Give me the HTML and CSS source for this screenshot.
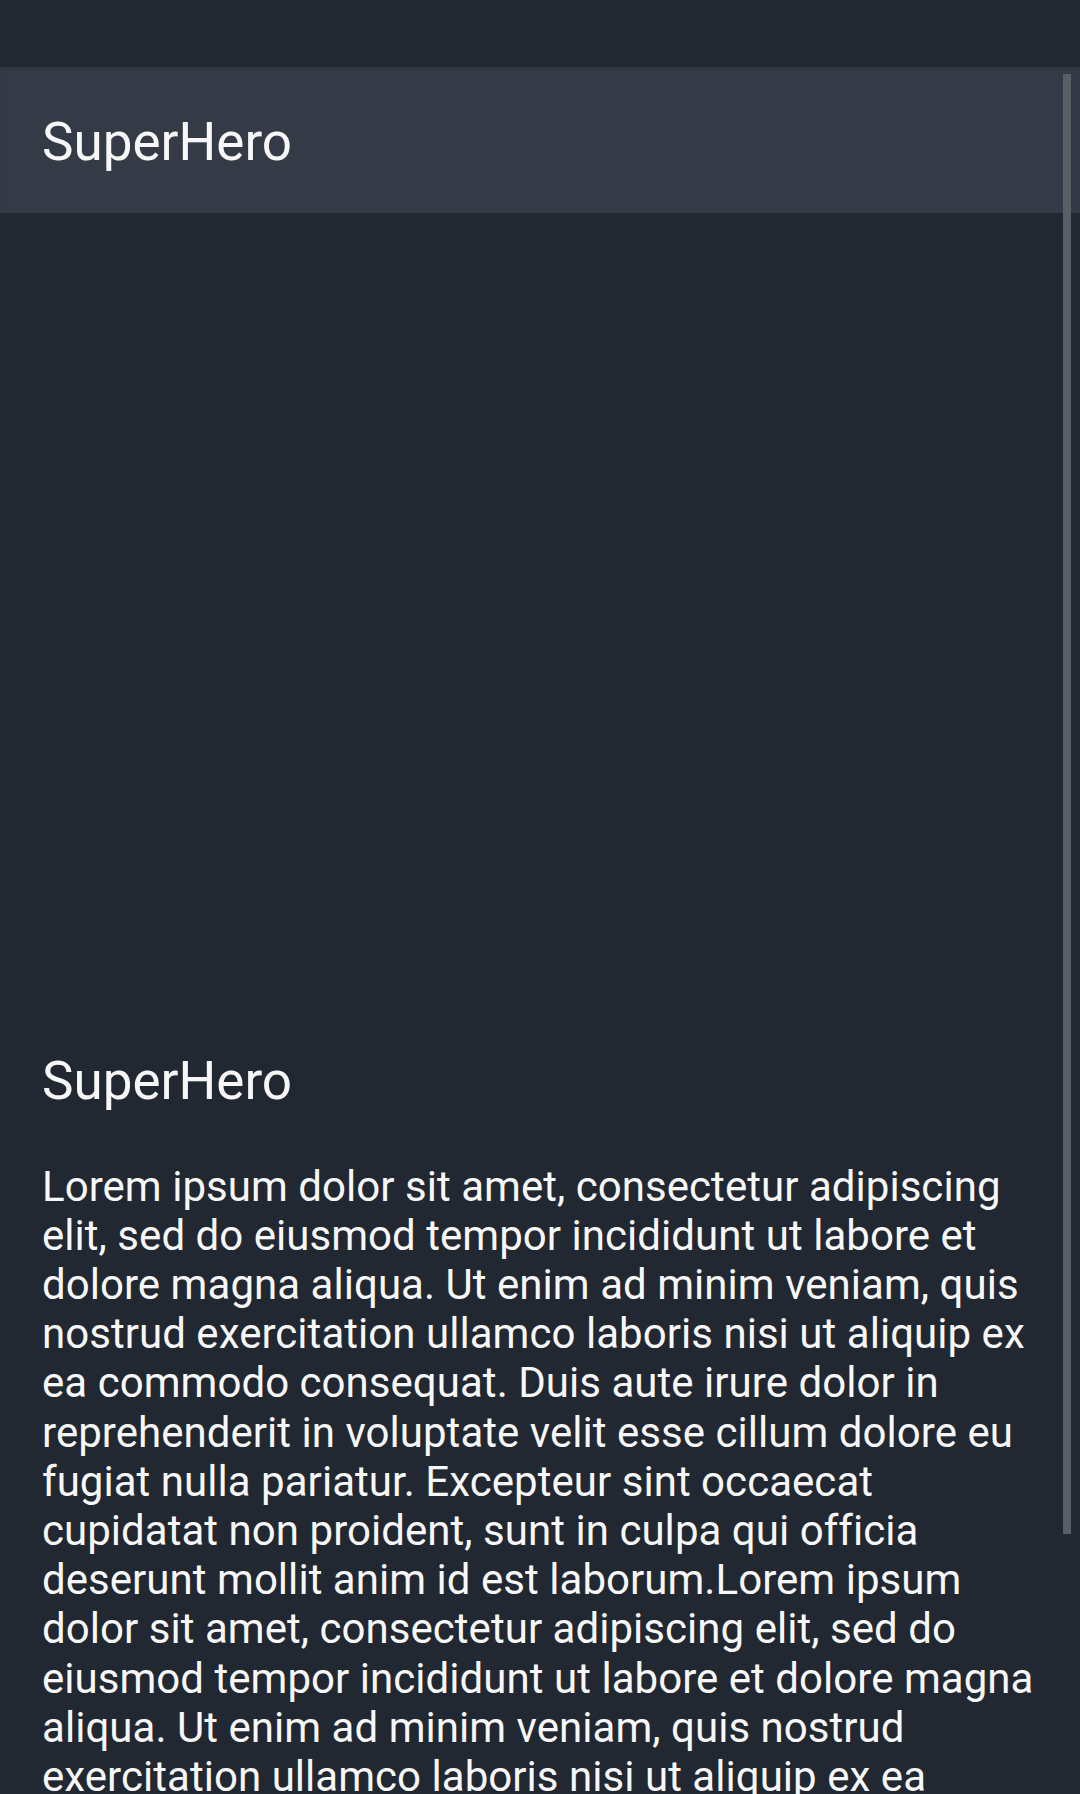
FILE: index.html
```html
<!DOCTYPE html>
<html lang="en">
<head>
<meta charset="utf-8">
<title>SuperHero</title>
<link rel="stylesheet" href="styles.css">
</head>
<body>
<div class="screen">
  <div class="status-bar"></div>
  <header class="app-bar">
    <h1 class="app-title">SuperHero</h1>
  </header>
  <main class="content">
    <div class="hero-image"></div>
    <h2 class="hero-name">SuperHero</h2>
    <p class="hero-desc">Lorem ipsum dolor sit amet, consectetur adipiscing elit, sed do eiusmod tempor incididunt ut labore et dolore magna aliqua. Ut enim ad minim veniam, quis nostrud exercitation ullamco laboris nisi ut aliquip ex ea commodo consequat. Duis aute irure dolor in reprehenderit in voluptate velit esse cillum dolore eu fugiat nulla pariatur. Excepteur sint occaecat cupidatat non proident, sunt in culpa qui officia deserunt mollit anim id est laborum.Lorem ipsum dolor sit amet, consectetur adipiscing elit, sed do eiusmod tempor incididunt ut labore et dolore magna aliqua. Ut enim ad minim veniam, quis nostrud exercitation ullamco laboris nisi ut aliquip ex ea commodo consequat. Duis aute irure dolor in reprehenderit in voluptate velit esse cillum dolore eu fugiat nulla pariatur. Excepteur sint occaecat cupidatat non proident, sunt in culpa qui officia deserunt mollit anim id est laborum.</p>
  </main>
  <div class="scrollbar"></div>
</div>
</body>
</html>
```

FILE: styles.css
```css
html, body {
  margin: 0;
  padding: 0;
  background: #222831;
}

body {
  width: 1080px;
  height: 1794px;
  overflow: hidden;
  font-family: Roboto, "Noto Sans", sans-serif;
  color: #f7f7f7;
}

.screen {
  position: relative;
  width: 1080px;
  height: 1794px;
  overflow: hidden;
  display: flex;
  flex-direction: column;
}

.status-bar {
  height: 67px;
  flex: none;
  background: #222831;
}

.app-bar {
  height: 146px;
  flex: none;
  box-sizing: border-box;
  padding: 6px 42px 0 42px;
  display: flex;
  align-items: center;
  background: #343a46;
  box-shadow: inset 0 2px 2px rgba(0, 0, 0, 0.12);
}

.app-title {
  margin: 0;
  font-size: 53px;
  font-weight: 400;
  line-height: 61.5px;
}

.content {
  flex: none;
  padding: 0 40px 0 42px;
}

.hero-image {
  height: 838px;
}

.hero-name {
  margin: 0;
  font-size: 53px;
  font-weight: 400;
  line-height: 61.5px;
}

.hero-desc {
  margin: 49px 0 0;
  font-size: 42px;
  line-height: 49.2px;
  letter-spacing: 0.04px;
}

.scrollbar {
  position: absolute;
  left: 1063px;
  top: 74px;
  width: 8px;
  height: 1460px;
  background: #5b5e64;
}
```
